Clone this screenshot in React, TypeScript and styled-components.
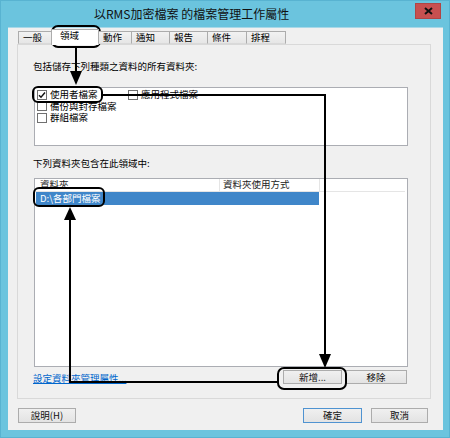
import React from 'react';
import styled, { createGlobalStyle } from 'styled-components';

const Global = createGlobalStyle`
  html, body { margin: 0; padding: 0; background: #fff; }
  body { font-family: "Noto Sans CJK TC", "Noto Sans", sans-serif; }
  #root { width: 450px; height: 438px; }
  * { box-sizing: border-box; }
`;

const Window = styled.div`
  position: relative;
  width: 450px;
  height: 438px;
  background: #6bc4de;
  border: 1px solid #58b3d1;
  display: flex;
  flex-direction: column;
  padding: 0 6px 7px 7px;
`;

const TitleBar = styled.div`
  height: 26px;
  display: flex;
  align-items: flex-start;
`;

const Title = styled.div`
  padding-left: 86px;
  padding-top: 5px;
  font-size: 12px;
  line-height: 16px;
  color: #111;
  white-space: nowrap;
`;

const CloseButton = styled.div`
  margin-left: auto;
  margin-right: 2px;
  margin-top: 2px;
  width: 26px;
  height: 16px;
  background: #c75050;
  border: 1px solid #b04545;
  display: flex;
  align-items: center;
  justify-content: center;
`;

const Client = styled.div`
  flex: 1;
  background: #f0f0f0;
  border-top: 1px solid #a8d8e8;
  display: flex;
  flex-direction: column;
  padding: 3px 12px 0 9px;
  font-size: 9.5px;
  color: #000;
`;

const TabStrip = styled.div`
  display: flex;
  height: 13px;
  padding-left: 2px;
  position: relative;
  z-index: 1;
`;

const Tab = styled.div<{ $w: number; $active?: boolean }>`
  width: ${(p) => p.$w}px;
  height: ${(p) => (p.$active ? 16 : 13)}px;
  margin-top: ${(p) => (p.$active ? -2 : 0)}px;
  margin-left: -1px;
  border: 1px solid #acacac;
  border-bottom: ${(p) => (p.$active ? 'none' : '1px solid #d9d9d9')};
  background: ${(p) => (p.$active ? '#ffffff' : 'linear-gradient(#f2f2f2, #e6e6e6)')};
  padding-left: ${(p) => (p.$active ? 8 : 4)}px;
  line-height: 11px;
  font-size: 9.5px;
  white-space: nowrap;
`;

const Panel = styled.div`
  height: 355px;
  border: 1px solid #d9d9d9;
  background: #f0f0f0;
  display: flex;
  flex-direction: column;
  padding: 15px 22px 0 15px;
`;

const Label = styled.div<{ $gap?: number }>`
  height: 12px;
  line-height: 12px;
  margin-top: ${(p) => p.$gap ?? 0}px;
  white-space: nowrap;
`;

const CheckList = styled.div`
  margin: 15px 0 0 1px;
  height: 59px;
  border: 1px solid #abadb3;
  background: #fff;
  display: grid;
  grid-auto-flow: column;
  grid-template-rows: repeat(3, 11.5px);
  grid-auto-columns: 91px;
  padding: 1px 0 0 2px;
`;

const CheckItem = styled.label`
  display: flex;
  align-items: center;
  gap: 3px;
  white-space: nowrap;
  line-height: 11px;
`;

const Box = styled.span`
  width: 10px;
  height: 10px;
  border: 1px solid #707070;
  background: #fff;
  display: flex;
  align-items: center;
  justify-content: center;
  flex-shrink: 0;
`;

const ListView = styled.div`
  margin: 9px 0 0 1px;
  height: 189px;
  border: 1px solid #abadb3;
  background: #fff;
  display: flex;
  flex-direction: column;
`;

const Header = styled.div`
  height: 13px;
  display: flex;
  border-bottom: 1px solid #e5e5e5;
  margin-right: 2px;
`;

const HeaderCell = styled.div<{ $w: number; $pl: number }>`
  width: ${(p) => p.$w}px;
  padding-left: ${(p) => p.$pl}px;
  border-right: 1px solid #e5e5e5;
  line-height: 11px;
  white-space: nowrap;
  color: #222;
`;

const SelectedRow = styled.div`
  margin-left: 1px;
  width: 283px;
  height: 13px;
  background: #3f86c9;
  color: #fff;
  padding-left: 4px;
  line-height: 13px;
  white-space: nowrap;
`;

const ActionRow = styled.div`
  margin-top: 3px;
  height: 14px;
  display: flex;
  align-items: center;
  padding-right: 1px;
`;

const Link = styled.a`
  color: #0066cc;
  text-decoration: underline;
  white-space: nowrap;
  line-height: 12px;
  margin-top: 1px;
`;

const ButtonGroup = styled.div<{ $gap: number }>`
  margin-left: auto;
  display: flex;
  gap: ${(p) => p.$gap}px;
`;

const Button = styled.div<{ $w: number; $h: number; $default?: boolean }>`
  width: ${(p) => p.$w}px;
  height: ${(p) => p.$h}px;
  border: 1px solid ${(p) => (p.$default ? '#4f93d1' : '#acacac')};
  background: linear-gradient(#f0f0f0, #e3e3e3);
  display: flex;
  align-items: center;
  justify-content: center;
  font-size: 9.5px;
  line-height: 11px;
  white-space: nowrap;
  color: #111;
`;

const BottomRow = styled.div`
  margin-top: 9px;
  display: flex;
  padding: 0 3px 0 1px;
`;

const Overlay = styled.svg`
  position: absolute;
  left: -1px;
  top: -1px;
  pointer-events: none;
`;

const tabs: { label: string; w: number; active?: boolean }[] = [
  { label: '一般', w: 34 },
  { label: '領域', w: 48, active: true },
  { label: '動作', w: 34 },
  { label: '通知', w: 39 },
  { label: '報告', w: 39 },
  { label: '條件', w: 40 },
  { label: '排程', w: 40 },
];

const Check = () => (
  <svg width="8" height="8" viewBox="0 0 8 8">
    <path d="M1 4.2 L3 6.3 L7 1.5" stroke="#111" strokeWidth="1.4" fill="none" />
  </svg>
);

export default function App() {
  return (
    <>
      <Global />
      <Window>
        <TitleBar>
          <Title>以RMS加密檔案 的檔案管理工作屬性</Title>
          <CloseButton>
            <svg width="9" height="8" viewBox="0 0 9 8">
              <path d="M1 1 L8 7 M8 1 L1 7" stroke="#111" strokeWidth="2" />
            </svg>
          </CloseButton>
        </TitleBar>
        <Client>
          <TabStrip>
            {tabs.map((t) => (
              <Tab key={t.label} $w={t.w} $active={t.active}>
                {t.label}
              </Tab>
            ))}
          </TabStrip>
          <Panel>
            <Label>包括儲存下列種類之資料的所有資料夾:</Label>
            <CheckList>
              <CheckItem>
                <Box>
                  <Check />
                </Box>
                使用者檔案
              </CheckItem>
              <CheckItem>
                <Box />
                備份與封存檔案
              </CheckItem>
              <CheckItem>
                <Box />
                群組檔案
              </CheckItem>
              <CheckItem>
                <Box />
                應用程式檔案
              </CheckItem>
            </CheckList>
            <Label $gap={11}>下列資料夾包含在此領域中:</Label>
            <ListView>
              <Header>
                <HeaderCell $w={185} $pl={5}>資料夾</HeaderCell>
                <HeaderCell $w={100} $pl={3}>資料夾使用方式</HeaderCell>
              </Header>
              <SelectedRow>D:\各部門檔案</SelectedRow>
            </ListView>
            <ActionRow>
              <Link>設定資料夾管理屬性...</Link>
              <ButtonGroup $gap={3}>
                <Button $w={59} $h={14}>新增...</Button>
                <Button $w={62} $h={14}>移除</Button>
              </ButtonGroup>
            </ActionRow>
          </Panel>
          <BottomRow>
            <Button $w={58} $h={15}>說明(H)</Button>
            <ButtonGroup $gap={9}>
              <Button $w={59} $h={15} $default>確定</Button>
              <Button $w={57} $h={15}>取消</Button>
            </ButtonGroup>
          </BottomRow>
        </Client>
        <Overlay width="450" height="438" viewBox="0 0 450 438">
          <g stroke="#000" strokeWidth="2" fill="none">
            <rect x="52" y="26" width="48" height="21" rx="6" />
            <rect x="33" y="87" width="69" height="15" rx="5" />
            <rect x="34" y="188" width="70" height="18" rx="5" />
            <rect x="278" y="368" width="68" height="21" rx="6" />
            <path d="M76 47 V74" />
            <path d="M102 95 H325 V356" />
            <path d="M278 382 H70 V218" />
          </g>
          <g fill="#000">
            <path d="M76 85 L70 71 L82 71 Z" />
            <path d="M325 368 L319 354 L331 354 Z" />
            <path d="M70 207 L64 220 L76 220 Z" />
          </g>
        </Overlay>
      </Window>
    </>
  );
}
